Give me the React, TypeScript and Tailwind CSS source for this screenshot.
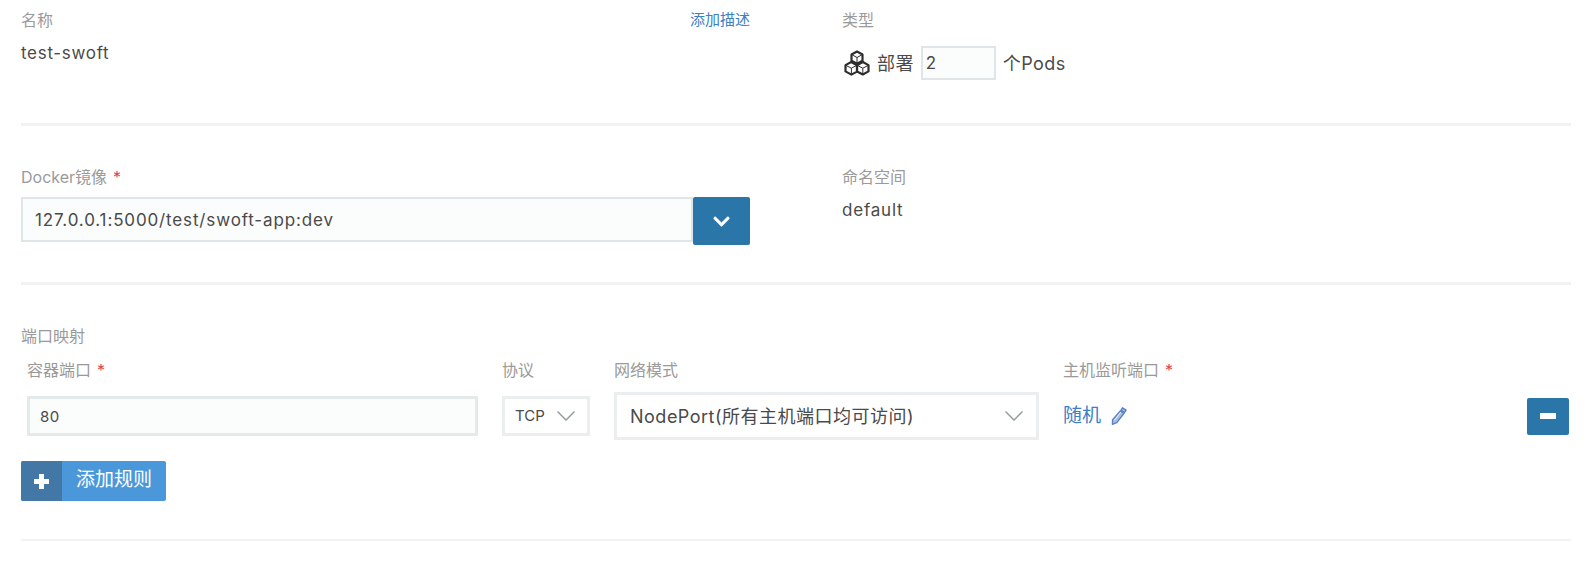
import React from 'react'
import { FaChevronDown } from 'react-icons/fa'

const font = 'font-["Inter","Noto_Sans_CJK_SC",sans-serif]'

const Label: React.FC<{ text: string; required?: boolean; className?: string }> = ({ text, required, className }) => (
  <div className={`h-5 text-[16px] leading-5 text-[#9a9a9a] ${className ?? ''}`}>
    {text}
    {required && <span className="ml-[6px] text-[#e0434f]">*</span>}
  </div>
)

const Cubes = () => (
  <svg width="26" height="26" viewBox="0 0 26 26" fill="none" stroke="#2d2d2d" strokeWidth="2.2" strokeLinejoin="round">
    <path d="M13 1.5l5.5 3v6.2L13 13.7l-5.5-3V4.5z" />
    <path d="M7.5 4.5L13 7.5l5.5-3M13 7.5v6" strokeWidth="1" />
    <path d="M7.2 12l5.8 3.2v6.4l-5.6 3-5.9-3.2v-6.3z" />
    <path d="M1.6 15.2l5.8 3 5.6-3M7.4 18.2v6.3" strokeWidth="1" />
    <path d="M18.8 12l5.7 3.1v6.3l-5.7 3.1L13 21.6v-6.4z" />
    <path d="M13 15.2l5.8 3 5.7-3M18.8 18.2v6.3" strokeWidth="1" />
  </svg>
)

const Pencil = () => (
  <svg width="16" height="18" viewBox="0 0 16 18" fill="#a9bde3" stroke="#5b82c4" strokeWidth="1.4" strokeLinejoin="round">
    <path d="M11.5 0.8l3.6 2.3-1.5 2.4-3.6-2.3z" />
    <path d="M9.3 3.9l3.7 2.4-7.2 9.3-4.4 1.7 0.2-4.5z" />
    <path d="M3.4 13.2l6.4-8" stroke="#ffffff" strokeWidth="0.8" />
  </svg>
)

const Caret: React.FC<{ width: number }> = ({ width }) => (
  <svg width={width} height={width * 0.56} viewBox="0 0 18 10" fill="none" stroke="#8f9a9a" strokeWidth="1.4">
    <path d="M0.5 0.5L9 9l8.5-8.5" />
  </svg>
)

const PlusMark = () => (
  <svg width="15" height="15" viewBox="0 0 15 15" fill="#ffffff">
    <path d="M5 0h5v5h5v5h-5v5H5v-5H0V5h5z" />
  </svg>
)

export default function App() {
  return (
    <div className={`w-[1588px] h-[586px] overflow-hidden bg-white pl-[21px] pr-[17px] ${font}`}>
      {/* Name / type */}
      <div className="h-[113px] pt-[10px] flex border-b-[3px] border-[#f1f3f3] box-content">
        <div className="w-[729px]">
          <div className="flex justify-between">
            <Label text="名称" />
            <a className="text-[15px] leading-5 text-[#3d80c4]">添加描述</a>
          </div>
          <div className="mt-[13px] text-[17px] leading-5 tracking-[0.7px] text-[#4a4a4a]">test-swoft</div>
        </div>
        <div className="ml-[92px]">
          <Label text="类型" />
          <div className="mt-[16px] ml-[2px] flex items-center text-[18px] tracking-[0.4px] text-[#4a4a4a]">
            <Cubes />
            <span className="ml-[7px]">部署</span>
            <input
              readOnly
              value="2"
              className="ml-[7px] w-[75px] h-[34px] px-[3px] border-2 border-[#e0e6e8] bg-[#fbfcfc] text-[17px] text-[#4a4a4a] outline-none"
            />
            <span className="ml-[7px]">个Pods</span>
          </div>
        </div>
      </div>

      {/* Image / namespace */}
      <div className="h-[115px] pt-[41px] flex border-b-[3px] border-[#f1f3f3] box-content">
        <div className="w-[729px]">
          <Label text="Docker镜像" required />
          <div className="mt-[10px] flex">
            <input
              readOnly
              value="127.0.0.1:5000/test/swoft-app:dev"
              className="flex-1 h-[45px] px-[12px] border-2 border-[#e0e6e8] bg-[#fbfcfc] text-[17px] tracking-[0.86px] text-[#4a4a4a] outline-none"
            />
            <button className="w-[57px] h-[48px] flex items-center justify-center rounded-[2px] bg-[#2a76a8] text-white">
              <FaChevronDown size={19} />
            </button>
          </div>
        </div>
        <div className="ml-[92px]">
          <Label text="命名空间" />
          <div className="mt-[13px] text-[17px] leading-5 tracking-[0.8px] text-[#4a4a4a]">default</div>
        </div>
      </div>

      {/* Port mapping */}
      <div className="h-[213px] pt-[41px] border-b-2 border-[#f1f3f3] box-content">
        <Label text="端口映射" />
        <div className="mt-[14px] flex items-start">
          <div className="w-[481px] pl-[6px]">
            <Label text="容器端口" required />
            <input
              readOnly
              value="80"
              className="mt-[16px] w-[451px] h-[40px] px-[10px] border-[3px] border-[#e4e9ea] bg-[#fbfcfc] text-[15px] tracking-[0.5px] text-[#4a4a4a] outline-none"
            />
          </div>
          <div className="w-[112px]">
            <Label text="协议" />
            <div className="mt-[16px] w-[88px] h-[40px] flex items-center justify-between pl-[10px] pr-[12px] border-[3px] border-[#ebeeee] text-[15px] text-[#4a4a4a]">
              TCP
              <Caret width={18} />
            </div>
          </div>
          <div className="w-[449px]">
            <Label text="网络模式" />
            <div className="mt-[12px] w-[425px] h-[48px] flex items-center justify-between pl-[13px] pr-[13px] border-[3px] border-[#ebeeee] text-[18px] tracking-[0.5px] text-[#4a4a4a]">
              NodePort(所有主机端口均可访问)
              <Caret width={18} />
            </div>
          </div>
          <div className="flex-1">
            <Label text="主机监听端口" required />
            <div className="mt-[16px] flex items-center justify-between h-[40px]">
              <div className="flex items-center gap-[10px] text-[19px] text-[#3d80c4]">
                随机
                <Pencil />
              </div>
              <button className="w-[42px] h-[37px] mr-[2px] flex items-center justify-center rounded-[2px] bg-[#2a76a8]">
                <span className="block h-[6px] w-[16px] bg-white" />
              </button>
            </div>
          </div>
        </div>
        <button className="mt-[21px] flex h-[40px] w-[145px] overflow-hidden rounded-[2px] bg-[#4a98da] text-white">
          <span className="flex h-full w-[41px] items-center justify-center bg-[#4377a6]">
            <PlusMark />
          </span>
          <span className="flex-1 text-[19px] leading-[38px] text-center">添加规则</span>
        </button>
      </div>
    </div>
  )
}
